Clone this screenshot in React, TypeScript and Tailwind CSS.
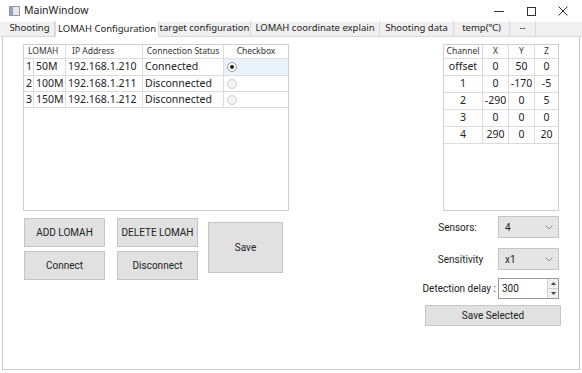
import React from 'react';

const tabs = [
  { label: 'Shooting', w: 50 },
  { label: 'LOMAH Configuration', w: 104, active: true },
  { label: 'target configuration', w: 92 },
  { label: 'LOMAH coordinate explain', w: 129 },
  { label: 'Shooting data', w: 74 },
  { label: 'temp(℃)', w: 56 },
  { label: '--', w: 26 },
];

const lomahRows = [
  { idx: '1', name: '50M', ip: '192.168.1.210', status: 'Connected', checked: true, h: 'h-[17px]' },
  { idx: '2', name: '100M', ip: '192.168.1.211', status: 'Disconnected', checked: false, h: 'h-[16px]' },
  { idx: '3', name: '150M', ip: '192.168.1.212', status: 'Disconnected', checked: false, h: 'h-[16px]' },
];

const channelRows = [
  ['offset', '0', '50', '0'],
  ['1', '0', '-170', '-5'],
  ['2', '-290', '0', '5'],
  ['3', '0', '0', '0'],
  ['4', '290', '0', '20'],
];

const WinButton: React.FC<{ label: string; className: string }> = ({ label, className }) => (
  <div
    className={`flex items-center justify-center bg-[#e1e1e1] border border-[#c4c4c4] text-[10px] text-[#222] whitespace-nowrap ${className}`}
    style={{ fontFamily: 'Roboto, "Liberation Sans", sans-serif' }}
  >
    {label}
  </div>
);

const Combo: React.FC<{ value: string }> = ({ value }) => (
  <div className="w-[61px] h-[22px] flex items-center justify-between bg-[#e5e5e5] border border-[#c4c4c4] pl-[6px] pr-[5px]">
    <span className="text-[10px] text-[#222]">{value}</span>
    <svg width="8" height="5" viewBox="0 0 8 5">
      <path d="M0.5 0.5 L4 4 L7.5 0.5" fill="none" stroke="#8a8a8a" strokeWidth="1" />
    </svg>
  </div>
);

const App: React.FC = () => {
  return (
    <div
      className="w-[582px] h-[373px] bg-white flex flex-col overflow-hidden"
      style={{ fontFamily: '"Noto Sans", "Open Sans", sans-serif' }}
    >
      {/* title bar */}
      <div className="h-[22px] flex items-center shrink-0">
        <svg className="ml-[9px]" width="11" height="10" viewBox="0 0 11 10">
          <rect x="0.5" y="0.5" width="10" height="9" fill="#e8e8e8" stroke="#9a9a9a" />
          <rect x="1" y="1" width="3" height="8" fill="#8aa6c8" />
        </svg>
        <span className="ml-[4px] text-[10.5px] text-[#222]">MainWindow</span>
        <div className="ml-auto flex items-center h-full">
          <div className="w-[32px] flex justify-center">
            <div className="w-[10px] h-px bg-[#333]" />
          </div>
          <div className="w-[32px] flex justify-center">
            <div className="w-[9px] h-[9px] border border-[#333]" />
          </div>
          <div className="w-[32px] flex justify-center mr-[3px]">
            <svg width="10" height="10" viewBox="0 0 10 10">
              <path d="M0.5 0.5 L9.5 9.5 M9.5 0.5 L0.5 9.5" stroke="#333" strokeWidth="1" />
            </svg>
          </div>
        </div>
      </div>

      {/* tab bar */}
      <div className="h-[15px] flex items-end shrink-0 bg-[#f0f0f0] pl-[5px] border-b border-[#d9d9d9]">
        {tabs.map((t) => (
          <div
            key={t.label}
            className={`flex items-center justify-center whitespace-nowrap text-[9.5px] text-[#222] border-r border-[#d9d9d9] ${
              t.active ? 'bg-white h-[16px] -mb-px border-l' : 'h-[15px]'
            }`}
            style={{ width: t.w }}
          >
            {t.label}
          </div>
        ))}
      </div>

      {/* content pane */}
      <div className="flex-1 flex mx-[2px] mb-[3px] border-l border-r border-b border-[#c8c8c8] min-h-0">
        {/* left side */}
        <div className="pl-[20px] pt-[7px] w-[300px] flex flex-col">
          <div className="w-[266px] h-[167px] border border-[#cfcfcf] flex flex-col">
            <div className="h-[14px] flex text-[8.5px] text-[#333] border-b border-[#dcdcdc] shrink-0 whitespace-nowrap">
              <div className="w-[42px] pl-[4px] flex items-center border-r border-[#dcdcdc]">LOMAH</div>
              <div className="w-[77px] pl-[6px] flex items-center border-r border-[#dcdcdc]">IP Address</div>
              <div className="w-[81px] flex items-center justify-center border-r border-[#dcdcdc]">Connection Status</div>
              <div className="flex-1 flex items-center justify-center">Checkbox</div>
            </div>
            {lomahRows.map((r) => (
              <div key={r.idx} className={`${r.h} flex text-[10.5px] text-[#222] border-b border-[#dcdcdc] shrink-0 whitespace-nowrap`}>
                <div className="w-[10px] flex items-center pl-[2px] border-r border-[#dcdcdc]">{r.idx}</div>
                <div className="w-[32px] flex items-center pl-[2px] border-r border-[#dcdcdc]">{r.name}</div>
                <div className="w-[77px] flex items-center pl-[2px] border-r border-[#dcdcdc]">{r.ip}</div>
                <div className="w-[81px] flex items-center pl-[2px] border-r border-[#dcdcdc]">{r.status}</div>
                <div className={`flex-1 flex items-center pl-[3px] ${r.checked ? 'bg-[#eaf2fb]' : ''}`}>
                  {r.checked ? (
                    <div className="w-[10px] h-[10px] rounded-full border border-[#9a9a9a] bg-white flex items-center justify-center">
                      <div className="w-[4px] h-[4px] rounded-full bg-[#222]" />
                    </div>
                  ) : (
                    <div className="w-[10px] h-[10px] rounded-full border border-[#cfcfcf] bg-[#f2f2f2]" />
                  )}
                </div>
              </div>
            ))}
          </div>

          <div className="flex mt-[7px] pl-[1px]">
            <div className="flex flex-col gap-[4px]">
              <WinButton label="ADD LOMAH" className="w-[81px] h-[29px]" />
              <WinButton label="Connect" className="w-[81px] h-[29px]" />
            </div>
            <div className="flex flex-col gap-[4px] ml-[12px]">
              <WinButton label="DELETE LOMAH" className="w-[81px] h-[29px]" />
              <WinButton label="Disconnect" className="w-[81px] h-[29px]" />
            </div>
            <div className="ml-[10px] pt-[4px]">
              <WinButton label="Save" className="w-[75px] h-[51px]" />
            </div>
          </div>
        </div>

        {/* right side */}
        <div className="ml-[122px] pt-[7px] w-[136px] flex flex-col">
          <div className="ml-[18px] w-[116px] h-[167px] border border-[#cfcfcf] flex flex-col">
            <div className="h-[14px] flex text-[8.5px] text-[#333] border-b border-[#dcdcdc] shrink-0">
              <div className="w-[39px] flex items-center justify-center border-r border-[#dcdcdc]">Channel</div>
              <div className="w-[26px] flex items-center justify-center border-r border-[#dcdcdc]">X</div>
              <div className="w-[26px] flex items-center justify-center border-r border-[#dcdcdc]">Y</div>
              <div className="flex-1 flex items-center justify-center">Z</div>
            </div>
            {channelRows.map((r) => (
              <div key={r[0]} className="h-[17px] flex text-[10.5px] text-[#222] border-b border-[#dcdcdc] shrink-0">
                <div className="w-[39px] flex items-center justify-center border-r border-[#dcdcdc]">{r[0]}</div>
                <div className="w-[26px] flex items-center justify-center border-r border-[#dcdcdc]">{r[1]}</div>
                <div className="w-[26px] flex items-center justify-center border-r border-[#dcdcdc]">{r[2]}</div>
                <div className="flex-1 flex items-center justify-center">{r[3]}</div>
              </div>
            ))}
          </div>

          <div
            className="flex flex-col mt-[5px] text-[10px] text-[#222]"
            style={{ fontFamily: 'Roboto, "Liberation Sans", sans-serif' }}
          >
            <div className="flex items-center">
              <div className="w-[73px] flex justify-center pr-[8px]">Sensors:</div>
              <Combo value="4" />
            </div>
            <div className="flex items-center mt-[10px]">
              <div className="w-[73px] flex justify-center pr-[2px]">Sensitivity</div>
              <Combo value="x1" />
            </div>
            <div className="flex items-center mt-[8px]">
              <div className="w-[73px] flex justify-end pr-[2px] whitespace-nowrap">Detection delay :</div>
              <div className="w-[61px] h-[21px] flex items-center border border-[#9a9a9a] bg-white">
                <span className="pl-[3px] flex-1">300</span>
                <div className="w-[11px] h-full flex flex-col border-l border-[#d0d0d0]">
                  <div className="flex-1 flex items-center justify-center bg-[#f0f0f0] border-b border-[#d0d0d0]">
                    <svg width="5" height="3" viewBox="0 0 5 3"><path d="M0 3 L2.5 0 L5 3 Z" fill="#444" /></svg>
                  </div>
                  <div className="flex-1 flex items-center justify-center bg-[#f0f0f0]">
                    <svg width="5" height="3" viewBox="0 0 5 3"><path d="M0 0 L2.5 3 L5 0 Z" fill="#444" /></svg>
                  </div>
                </div>
              </div>
            </div>
            <WinButton label="Save Selected" className="w-[136px] h-[21px] mt-[6px]" />
          </div>
        </div>
      </div>
    </div>
  );
};

export default App;
